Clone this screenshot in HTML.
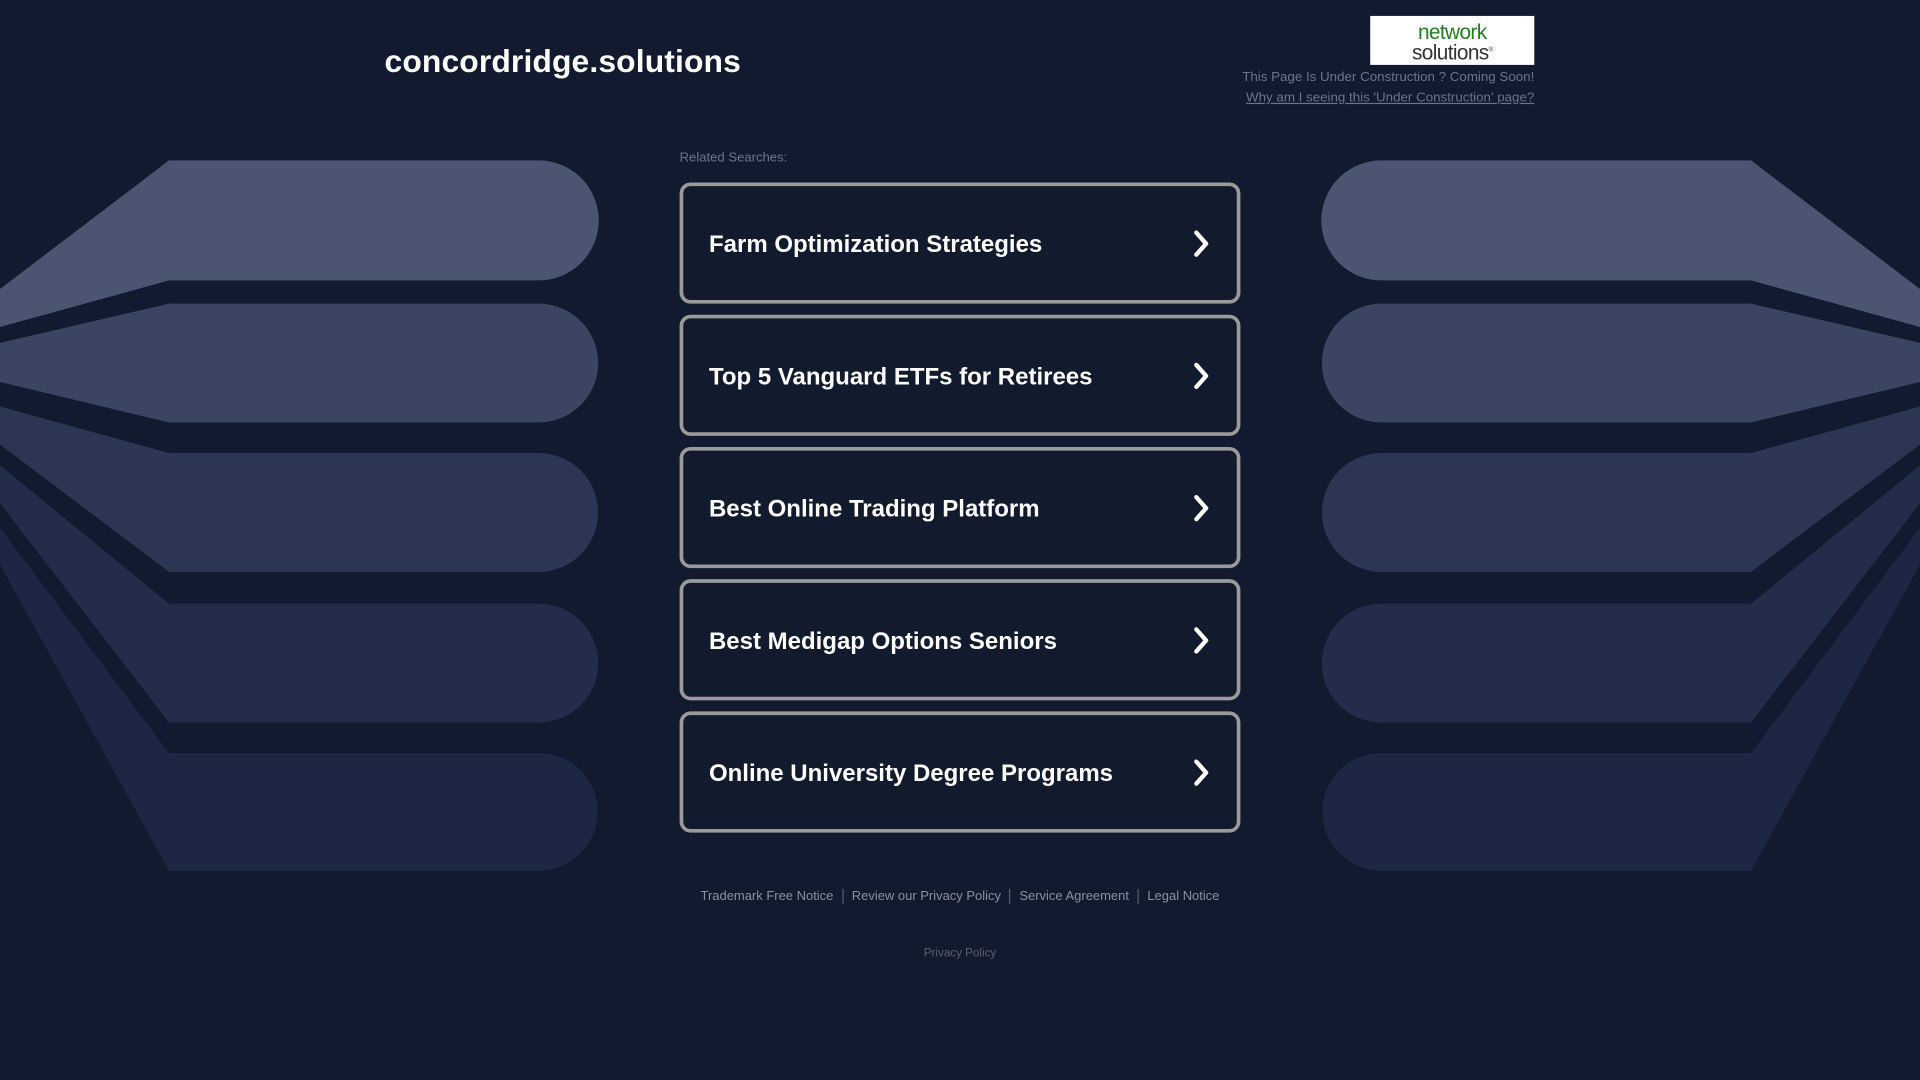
<!DOCTYPE html>
<html><head><meta charset="utf-8"><style>
html,body{margin:0;padding:0;background:#111a2e;overflow:hidden;width:1920px;height:1080px}
#s{position:absolute;left:0;top:0;width:1568px;height:882px;transform:scale(1.22449);transform-origin:0 0;font-family:"Liberation Sans",sans-serif}
.t{position:absolute;left:314px;top:35px;font-size:26px;font-weight:bold;color:#fff;letter-spacing:0.1px}
.logo{position:absolute;left:1119px;top:13px;width:134px;height:40px;background:#fff;text-align:center;line-height:14px;font-size:17px;letter-spacing:-0.5px}
.r{position:absolute;right:315px;font-size:10.9px;color:#6b7390}
.rs{position:absolute;left:555px;top:123px;font-size:10.7px;color:#6b7390}
.b{position:absolute;left:555px;width:452px;height:93px;border:3px solid #9a9a9a;border-radius:9px;background:#121a2e}
.b span{position:absolute;left:21px;top:37px;font-size:19.6px;font-weight:bold;color:#fff}
.b svg{position:absolute;left:416px;top:35px}
.f{position:absolute;top:726px;left:0;width:1568px;text-align:center;font-size:10.6px;color:#8a90a0}
.f span{padding:0 7px;border-left:1px solid #5a6070}
.f span:first-child{border:none}
</style></head><body><div id="s">
<svg width="1568" height="882" style="position:absolute;left:0;top:0">
<defs><g id="w">
<polygon points="0,236 138,131 138,229 0,267" fill="#4b5572"/>
<path d="M137 131H440A48 48 0 0 1 440 229H137Z" fill="#4b5572"/>
<polygon points="0,280 138,248 138,345 0,312" fill="#3b4563"/>
<path d="M137 248H440A48.5 48.5 0 0 1 440 345H137Z" fill="#3b4563"/>
<polygon points="0,332 138,370 138,467 0,363" fill="#2c3654"/>
<path d="M137 370H440A48.5 48.5 0 0 1 440 467H137Z" fill="#2c3654"/>
<polygon points="0,380 138,493 138,590 0,411" fill="#232d4b"/>
<path d="M137 493H440A48.5 48.5 0 0 1 440 590H137Z" fill="#232d4b"/>
<polygon points="0,431 138,615 138,711 0,461" fill="#1d2744"/>
<path d="M137 615H440A48 48 0 0 1 440 711H137Z" fill="#1d2744"/>
</g></defs>
<use href="#w"/>
<use href="#w" transform="translate(1568,0) scale(-1,1)"/>
</svg>
<div class="t">concordridge.solutions</div>
<div class="logo"><div style="color:#1d7f1d;margin-top:7px">network</div><div style="color:#333">solutions<sup style="font-size:5px">®</sup></div></div>
<div class="r" style="top:57px">This Page Is Under Construction ? Coming Soon!</div>
<div class="r" style="top:74px;text-decoration:underline">Why am I seeing this 'Under Construction' page?</div>
<div class="rs">Related Searches:</div>
<div class="b" style="top:149px"><span>Farm Optimization Strategies</span><svg width="14" height="24"><path d="M3 3L11 12L3 21" stroke="#fff" stroke-width="3.5" fill="none" stroke-linecap="round" stroke-linejoin="round"/></svg></div>
<div class="b" style="top:257px"><span>Top 5 Vanguard ETFs for Retirees</span><svg width="14" height="24"><path d="M3 3L11 12L3 21" stroke="#fff" stroke-width="3.5" fill="none" stroke-linecap="round" stroke-linejoin="round"/></svg></div>
<div class="b" style="top:365px"><span>Best Online Trading Platform</span><svg width="14" height="24"><path d="M3 3L11 12L3 21" stroke="#fff" stroke-width="3.5" fill="none" stroke-linecap="round" stroke-linejoin="round"/></svg></div>
<div class="b" style="top:473px"><span>Best Medigap Options Seniors</span><svg width="14" height="24"><path d="M3 3L11 12L3 21" stroke="#fff" stroke-width="3.5" fill="none" stroke-linecap="round" stroke-linejoin="round"/></svg></div>
<div class="b" style="top:581px"><span>Online University Degree Programs</span><svg width="14" height="24"><path d="M3 3L11 12L3 21" stroke="#fff" stroke-width="3.5" fill="none" stroke-linecap="round" stroke-linejoin="round"/></svg></div>
<div class="f"><span>Trademark Free Notice</span><span>Review our Privacy Policy</span><span>Service Agreement</span><span>Legal Notice</span></div>
<div class="f" style="top:773px;font-size:9.5px;color:#5a6070">Privacy Policy</div>
</div></body></html>
